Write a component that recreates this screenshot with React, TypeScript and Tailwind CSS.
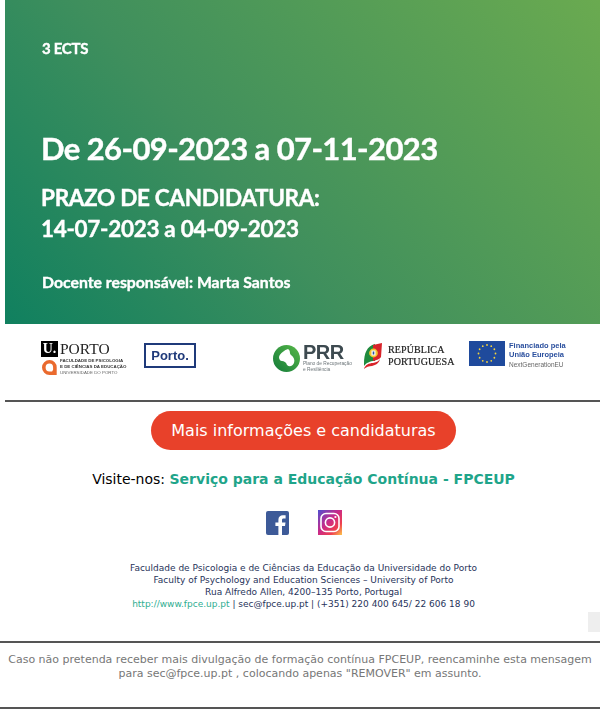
const footerLines = [
  "Faculdade de Psicologia e de Ciências da Educação da Universidade do Porto",
  "Faculty of Psychology and Education Sciences – University of Porto",
  "Rua Alfredo Allen, 4200–135 Porto, Portugal",
];

const stars = Array.from({ length: 12 }, (_, i) => {
  const a = (i * Math.PI) / 6;
  return { x: 18 + Math.cos(a) * 8.5, y: 12.5 + Math.sin(a) * 8.5 };
});

function UPortoLogo() {
  return (
    <div className="w-[90px] blur-[0.3px]">
      <div className="flex items-center gap-[2px] h-[16px]">
        <div className="w-[17px] h-[16px] bg-black text-white text-[14px] font-bold leading-[16px] text-center font-['Liberation_Serif',serif]">
          U.
        </div>
        <span className="text-[15.5px] leading-[16px] text-[#222] font-['Liberation_Serif',serif]">
          PORTO
        </span>
      </div>
      <div className="flex items-center gap-[2px] mt-[1px]">
        <svg className="shrink-0" width="17" height="17" viewBox="0 0 17 17">
          <path
            d="M8.5 1a7.5 7.5 0 1 0 0 15h7.2v-7.5A7.2 7.2 0 0 0 8.5 1z"
            fill="#ea6a2e"
          />
          <path
            d="M8.5 4.6a3.9 3.9 0 0 0 0 7.8h2.6l1-1.6V8.5A3.9 3.9 0 0 0 8.5 4.6z"
            fill="#fff"
          />
        </svg>
        <div className="text-[4.4px] leading-[6px] font-bold text-[#333] font-['Liberation_Sans',sans-serif] whitespace-nowrap">
          <div>FACULDADE DE PSICOLOGIA</div>
          <div>E DE CIÊNCIAS DA EDUCAÇÃO</div>
          <div className="font-normal text-[#666]">UNIVERSIDADE DO PORTO</div>
        </div>
      </div>
    </div>
  );
}

function PrrLogo() {
  return (
    <div className="flex items-center gap-[3px] blur-[0.3px]">
      <svg className="shrink-0" width="27" height="27" viewBox="0 0 27 27">
        <defs>
          <linearGradient id="prr" x1="0" y1="1" x2="1" y2="0">
            <stop offset="0" stopColor="#137a3a" />
            <stop offset="1" stopColor="#57b848" />
          </linearGradient>
        </defs>
        <circle cx="13.5" cy="13.5" r="13.5" fill="url(#prr)" />
        <path
          d="M6 12C7 8 12 5 15 4c3 2 1 4 3 6 3 2 4 5 3 8-2 4-5 4-7 2-1-3-3-4-5-4-2 0-3-2-3-4z"
          fill="#fff"
        />
      </svg>
      <div className="font-['Liberation_Sans',sans-serif] text-[#3d4a50]">
        <div className="text-[20px] leading-[17px] font-bold tracking-[-0.5px]">PRR</div>
        <div className="text-[4.8px] leading-[6px] whitespace-nowrap text-[#6b7478]">
          Plano de Recuperação
        </div>
        <div className="text-[4.8px] leading-[6px] text-[#6b7478]">
          e Resiliência
        </div>
      </div>
    </div>
  );
}

function RepublicaLogo() {
  return (
    <div className="flex items-center gap-[6px] blur-[0.3px]">
      <svg className="shrink-0" width="18" height="26" viewBox="0 0 18 26">
        <path d="M0 21C0 10 3 3 11 1v17C6 18 2 20 0 23z" fill="#1f8a3d" />
        <path d="M9 2l9-2-1 14c-2 3-5 3-8 4z" fill="#d8232a" />
        <path d="M0 26c1-4 5-6 9-6 4-1 6-2 7-4-1 4-4 6-8 7-3 0-6 1-8 3z" fill="#d8232a" />
        <circle cx="9.5" cy="10" r="4.4" fill="#f2c230" />
        <rect x="7.5" y="7.5" width="4" height="5" fill="#fff" />
        <rect x="8.7" y="8.5" width="1.6" height="3" fill="#2a4f9e" />
      </svg>
      <div className="text-[10px] leading-[12px] text-[#222] [-webkit-text-stroke:0.2px_#222] font-['Liberation_Serif',serif] whitespace-nowrap tracking-[0.1px]">
        <div>REPÚBLICA</div>
        <div>PORTUGUESA</div>
      </div>
    </div>
  );
}

function EuLogo() {
  return (
    <div className="flex items-start gap-[4px] blur-[0.3px]">
      <svg className="shrink-0" width="36" height="25" viewBox="0 0 36 25">
        <rect width="36" height="25" fill="#1f4a9c" />
        {stars.map((s, i) => (
          <circle key={i} cx={s.x} cy={s.y} r="0.9" fill="#f5d33c" />
        ))}
      </svg>
      <div className="font-['Liberation_Sans',sans-serif] whitespace-nowrap">
        <div className="text-[7.5px] leading-[9px] font-bold text-[#2a4f9e]">
          Financiado pela
        </div>
        <div className="text-[7.5px] leading-[10px] font-bold text-[#2a4f9e]">
          União Europeia
        </div>
        <div className="text-[6.5px] leading-[9px] text-[#666]">
          NextGenerationEU
        </div>
      </div>
    </div>
  );
}

function FacebookIcon() {
  return (
    <svg width="23" height="24" viewBox="0 0 23 24">
      <rect width="23" height="24" rx="2" fill="#3d5a98" />
      <path
        d="M16 24v-9h3l.5-3.6H16V9.2c0-1 .3-1.7 1.8-1.7h1.8V4.3c-.4 0-1.4-.1-2.7-.1-2.7 0-4.5 1.6-4.5 4.6v2.6h-3V15h3v9z"
        fill="#fff"
      />
    </svg>
  );
}

function InstagramIcon() {
  return (
    <svg width="24" height="25" viewBox="0 0 24 25">
      <defs>
        <linearGradient id="ig" x1="0" y1="0" x2="1" y2="1">
          <stop offset="0" stopColor="#4f4fd0" />
          <stop offset="0.45" stopColor="#c82a8a" />
          <stop offset="0.75" stopColor="#ee3f4f" />
          <stop offset="1" stopColor="#fdc84a" />
        </linearGradient>
      </defs>
      <rect width="24" height="25" fill="url(#ig)" />
      <rect
        x="3"
        y="3.5"
        width="18"
        height="18"
        rx="5"
        fill="none"
        stroke="#fff"
        strokeWidth="1.6"
      />
      <circle cx="12" cy="12.5" r="4.6" fill="none" stroke="#fff" strokeWidth="1.6" />
      <circle cx="17.4" cy="7" r="1.1" fill="#fff" />
    </svg>
  );
}

export default function App() {
  return (
    <div className="w-[600px] h-[715px] bg-white overflow-hidden font-['DejaVu_Sans',sans-serif]">
      {/* Banner */}
      <div className="ml-[5px] h-[324px] pl-[36px] bg-[linear-gradient(50deg,#10805f_0%,#3f8f5d_40%,#6aaa50_100%)] text-white font-['Lato',sans-serif] font-bold [-webkit-text-stroke:0.4px_white] blur-[0.3px]">
        <div className="pt-[38px] pl-[1px] text-[15px] leading-[20px] tracking-[-0.3px]">3 ECTS</div>
        <div className="mt-[70px] text-[31px] leading-[40px] tracking-[-0.6px]">
          De 26-09-2023 a 07-11-2023
        </div>
        <div className="mt-[14px] text-[22.5px] leading-[31px] tracking-[-0.3px]">
          PRAZO DE CANDIDATURA:
          <br />
          14-07-2023 a 04-09-2023
        </div>
        <div className="mt-[28px] pl-[1px] text-[15.8px] leading-[20px]">
          Docente responsável: Marta Santos
        </div>
      </div>

      {/* Logos */}
      <div className="h-[76px] pl-[41px] pt-[17px] flex items-start">
        <UPortoLogo />
        <div className="ml-[13px] mt-[2px] w-[52px] h-[25px] border-2 border-[#1f3a7a] flex items-center justify-center text-[13px] font-bold text-[#1f3a7a] font-['Liberation_Sans',sans-serif] blur-[0.3px]">
          Porto.
        </div>
        <div className="ml-[77px] mt-[3px] w-[91px]">
          <PrrLogo />
        </div>
        <div className="mt-[2px] w-[105px]">
          <RepublicaLogo />
        </div>
        <EuLogo />
      </div>
      <div className="ml-[5px] h-[2px] bg-[#555]" />

      {/* Call to action */}
      <div className="flex justify-center mt-[9px]">
        <a className="ml-[7px] w-[305px] h-[39px] rounded-full bg-[#e8412a] text-white text-[16px] leading-[39px] text-center">
          Mais informações e candidaturas
        </a>
      </div>
      <p className="mt-[19px] ml-[7px] text-center text-[14px] leading-[20px] text-black">
        Visite-nos:{" "}
        <span className="font-bold text-[#1fa58a]">
          Serviço para a Educação Contínua - FPCEUP
        </span>
      </p>

      {/* Social */}
      <div className="flex justify-center gap-[29px] mt-[21px] ml-[8px] items-center">
        <FacebookIcon />
        <InstagramIcon />
      </div>

      {/* Address */}
      <div className="mt-[27px] ml-[7px] text-center text-[9px] leading-[12px] text-[#27335a]">
        {footerLines.map((line) => (
          <div key={line}>{line}</div>
        ))}
        <div>
          <span className="text-[#2fae92]">http://www.fpce.up.pt</span> | sec@fpce.up.pt | (+351) 220 400 645/ 22 606 18 90
        </div>
      </div>

      <div className="flex justify-end mt-[2px]">
        <div className="w-[12px] h-[20px] bg-[#eeeeee]" />
      </div>
      <div className="mt-[9px] h-[2px] bg-[#555]" />
      <p className="mt-[10px] px-[5px] text-center text-[11px] leading-[14px] text-[#777]">
        Caso não pretenda receber mais divulgação de formação contínua FPCEUP, reencaminhe esta mensagem para sec@fpce.up.pt , colocando apenas "REMOVER" em assunto.
      </p>
      <div className="mt-[26px] h-[2px] bg-[#555]" />
    </div>
  );
}
